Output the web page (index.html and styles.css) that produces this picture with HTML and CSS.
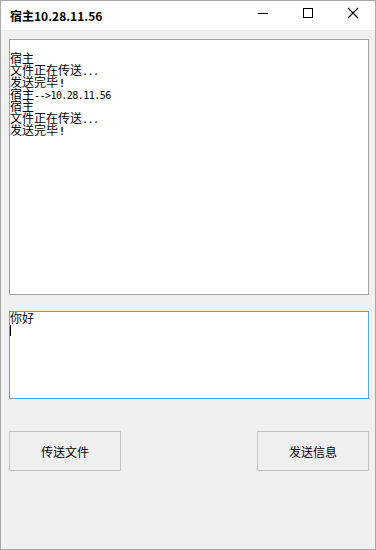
FILE: index.html
```html
<!DOCTYPE html>
<html lang="zh">
<head>
  <meta charset="utf-8">
  <title>宿主10.28.11.56</title>
  <link rel="stylesheet" href="styles.css">
</head>
<body>
  <div class="window">
    <header class="titlebar">
      <span class="title">宿主10.28.11.56</span>
      <div class="controls">
        <span class="control">
          <svg width="12" height="12" viewBox="0 0 12 12"><path d="M1 6.5h10" stroke="#000" stroke-width="1"/></svg>
        </span>
        <span class="control">
          <svg width="12" height="12" viewBox="0 0 12 12"><rect x="1.5" y="1.5" width="9" height="9" fill="none" stroke="#000" stroke-width="1"/></svg>
        </span>
        <span class="control">
          <svg width="12" height="12" viewBox="0 0 12 12"><path d="M1 1L11 11M11 1L1 11" stroke="#000" stroke-width="1.1"/></svg>
        </span>
      </div>
    </header>
    <main class="content">
      <div class="log">
        <div class="line">&nbsp;</div>
        <div class="line">宿主</div>
        <div class="line">文件正在传送<span class="ascii">...</span></div>
        <div class="line">发送完毕<span class="ascii bang">!</span></div>
        <div class="line">宿主<span class="ascii">--&gt;10.28.11.56</span></div>
        <div class="line">宿主</div>
        <div class="line">文件正在传送<span class="ascii">...</span></div>
        <div class="line">发送完毕<span class="ascii bang">!</span></div>
      </div>
      <div class="input">
        <div class="line">你好</div>
        <div class="line"><span class="caret"></span></div>
      </div>
      <div class="actions">
        <button class="button">传送文件</button>
        <button class="button">发送信息</button>
      </div>
    </main>
  </div>
</body>
</html>
```

FILE: styles.css
```css
*, *::before, *::after {
  margin: 0;
  padding: 0;
  box-sizing: border-box;
}

body {
  width: 376px;
  height: 550px;
  background-color: #f0f0f0;
  font-family: "Noto Sans CJK SC", "Noto Sans", sans-serif;
  font-size: 12px;
  color: #000000;
}

.window {
  display: flex;
  flex-direction: column;
  width: 376px;
  height: 550px;
  border: 1px solid #a8a8a8;
  background-color: #f0f0f0;
}

.titlebar {
  display: flex;
  align-items: center;
  justify-content: space-between;
  height: 29px;
  padding-left: 9px;
  background-color: #ffffff;
}

.title {
  font-size: 12px;
  font-weight: 700;
  line-height: 14px;
}

.controls {
  display: flex;
  height: 100%;
}

.control {
  display: flex;
  align-items: center;
  justify-content: center;
  width: 45px;
  height: 100%;
  padding-bottom: 6px;
}

.content {
  display: flex;
  flex-direction: column;
  padding: 9px 6px 0 8px;
}

.log, .input {
  width: 360px;
  background-color: #ffffff;
  overflow: hidden;
}

.log {
  height: 256px;
  border: 1px solid #a0a0a0;
}

.input {
  height: 88px;
  margin-top: 16px;
  border: 1px solid #5c9fe4;
}

.line {
  height: 12px;
  line-height: 12px;
  white-space: nowrap;
}

.ascii {
  font-family: "DejaVu Sans Mono", monospace;
  font-size: 10px;
  letter-spacing: -0.55px;
}

.bang {
  font-weight: 700;
  margin-left: 1px;
}

.caret {
  display: inline-block;
  width: 1px;
  height: 11px;
  margin-top: 1px;
  background-color: #000000;
  vertical-align: top;
}

.actions {
  display: flex;
  justify-content: space-between;
  margin-top: 32px;
  width: 360px;
}

.button {
  width: 112px;
  height: 40px;
  border: 1px solid #c3c3c3;
  background-color: #efefef;
  font-family: "Noto Sans CJK SC", "Noto Sans", sans-serif;
  font-size: 12px;
  color: #000000;
}
```
